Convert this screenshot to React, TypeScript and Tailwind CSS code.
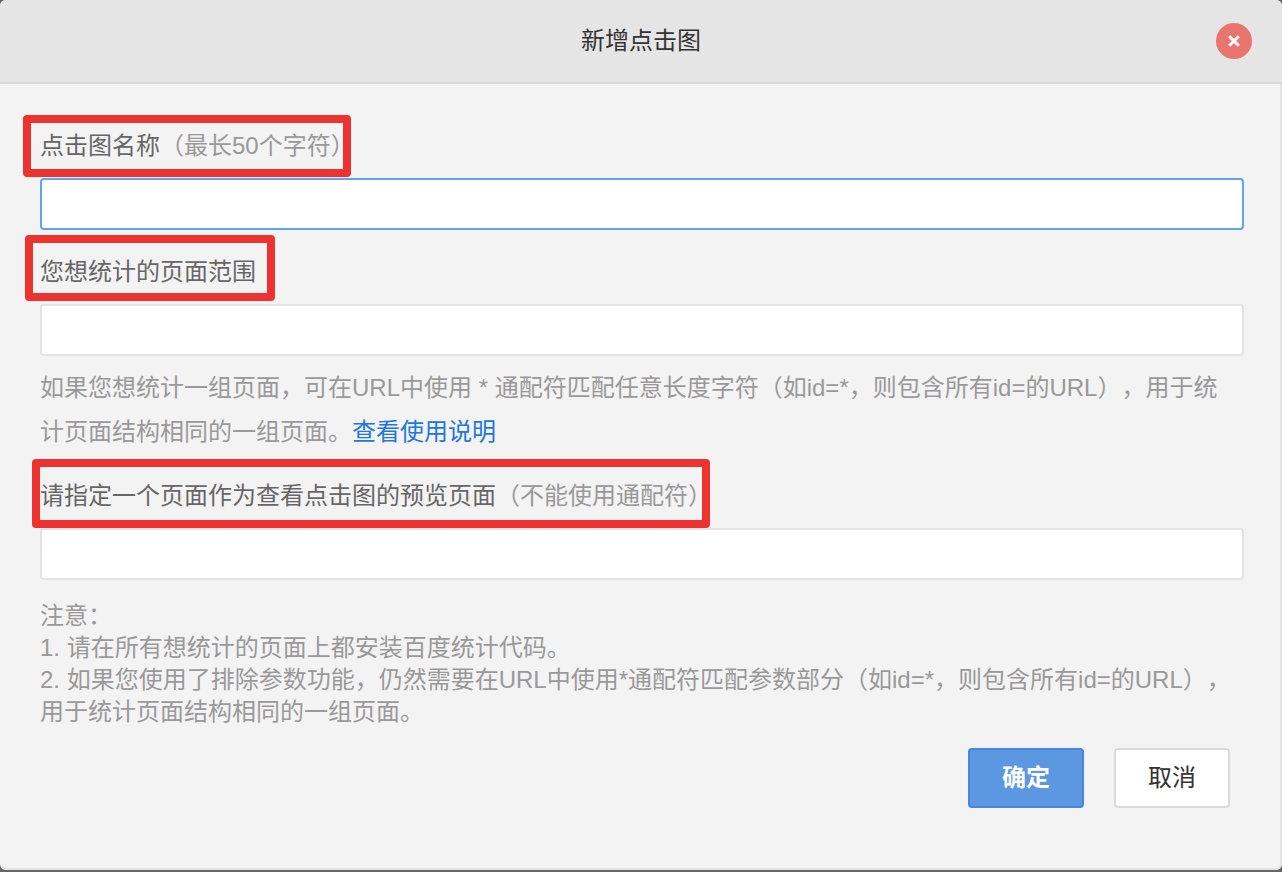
import { useState } from 'react';
import type { ReactNode } from 'react';
import clsx from 'clsx';

type FieldProps = {
  id: string;
  label: string;
  hint?: string;
  active?: boolean;
  frameClass: string;
  value: string;
  onChange: (value: string) => void;
  children?: ReactNode;
};

const Field = ({ id, label, hint, active, frameClass, value, onChange, children }: FieldProps) => (
  <div className="flex flex-col items-start">
    <label htmlFor={id} className="relative mb-2.5 text-[#666]">
      {label}
      {hint && <span className="text-[#999]">{hint}</span>}
      {/* Red highlight frame */}
      <span
        className={clsx('pointer-events-none absolute rounded-sm border-8 border-[#ed322f]', frameClass)}
      ></span>
    </label>
    <input
      id={id}
      type="text"
      value={value}
      onChange={e => onChange(e.target.value)}
      className={clsx(
        'h-[52px] w-full rounded border-2 bg-white px-3 text-[#333] outline-none focus:border-[#5fa5f1]',
        active ? 'border-[#5fa5f1]' : 'border-[#e3e3e3]'
      )}
    />
    {children}
  </div>
);

const App = () => {
  const [name, setName] = useState('');
  const [range, setRange] = useState('');
  const [preview, setPreview] = useState('');

  return (
    <div className="flex min-h-screen flex-col bg-[#666] pb-0.5 font-['Liberation_Sans','Noto_Sans_CJK_SC',sans-serif] text-2xl leading-[44px] [text-spacing-trim:space-all]">
      <div role="dialog" aria-labelledby="title" className="flex flex-1 flex-col overflow-hidden rounded-md bg-[#f3f3f3]">
        <header className="grid h-[84px] grid-cols-[1fr_auto_1fr] items-center border-b-2 border-[#d8d8d8] bg-[#e5e5e5] px-[30px]">
          <h1 id="title" className="col-start-2 text-[#333]">新增点击图</h1>
          <button
            type="button"
            aria-label="关闭"
            className="flex size-9 items-center justify-center justify-self-end rounded-full bg-[#e8766f]"
          >
            <svg viewBox="0 0 12 12" className="size-3" stroke="#fff" strokeWidth="3" fill="none">
              <path d="M1.2 1.2l9.6 9.6M10.8 1.2L1.2 10.8" />
            </svg>
          </button>
        </header>

        <form
          onSubmit={e => e.preventDefault()}
          className="flex flex-1 flex-col gap-5 rounded-b-md border-r-2 border-b-2 border-[#e3e3e3] pt-10 pr-9 pb-10 pl-10"
        >
          <Field
            id="name"
            label="点击图名称"
            hint="（最长50个字符）"
            active
            frameClass="-top-[9px] -bottom-[9px] -left-[17px] right-1"
            value={name}
            onChange={setName}
          />

          <Field
            id="range"
            label="您想统计的页面范围"
            frameClass="-top-[15px] -bottom-[7px] -left-[15px] -right-[19px]"
            value={range}
            onChange={setRange}
          >
            <p className="mt-2.5 pr-2 text-[#999]">
              如果您想统计一组页面，可在URL中使用 * 通配符匹配任意长度字符（如id=*，则包含所有id=的URL），用于统计页面结构相同的一组页面。
              <a href="#" className="text-[#2376dd]">查看使用说明</a>
            </p>
          </Field>

          <Field
            id="preview"
            label="请指定一个页面作为查看点击图的预览页面"
            hint="（不能使用通配符）"
            frameClass="-top-[15px] -bottom-[10px] -left-2 right-[2px]"
            value={preview}
            onChange={setPreview}
          />

          <div className="pr-2 leading-8 text-[#999]">
            <p>注意：</p>
            <p>1. 请在所有想统计的页面上都安装百度统计代码。</p>
            <p>2. 如果您使用了排除参数功能，仍然需要在URL中使用*通配符匹配参数部分（如id=*，则包含所有id=的URL），用于统计页面结构相同的一组页面。</p>
          </div>

          <div className="flex justify-end gap-[30px] pr-3.5">
            <button
              type="submit"
              className="h-[60px] w-[116px] rounded border-2 border-[#4587dc] bg-[#5c97e1] font-bold text-white"
            >
              确定
            </button>
            <button
              type="button"
              className="h-[60px] w-[116px] rounded border-2 border-[#dadada] bg-white text-[#333]"
            >
              取消
            </button>
          </div>
        </form>
      </div>
    </div>
  );
};

export default App;
